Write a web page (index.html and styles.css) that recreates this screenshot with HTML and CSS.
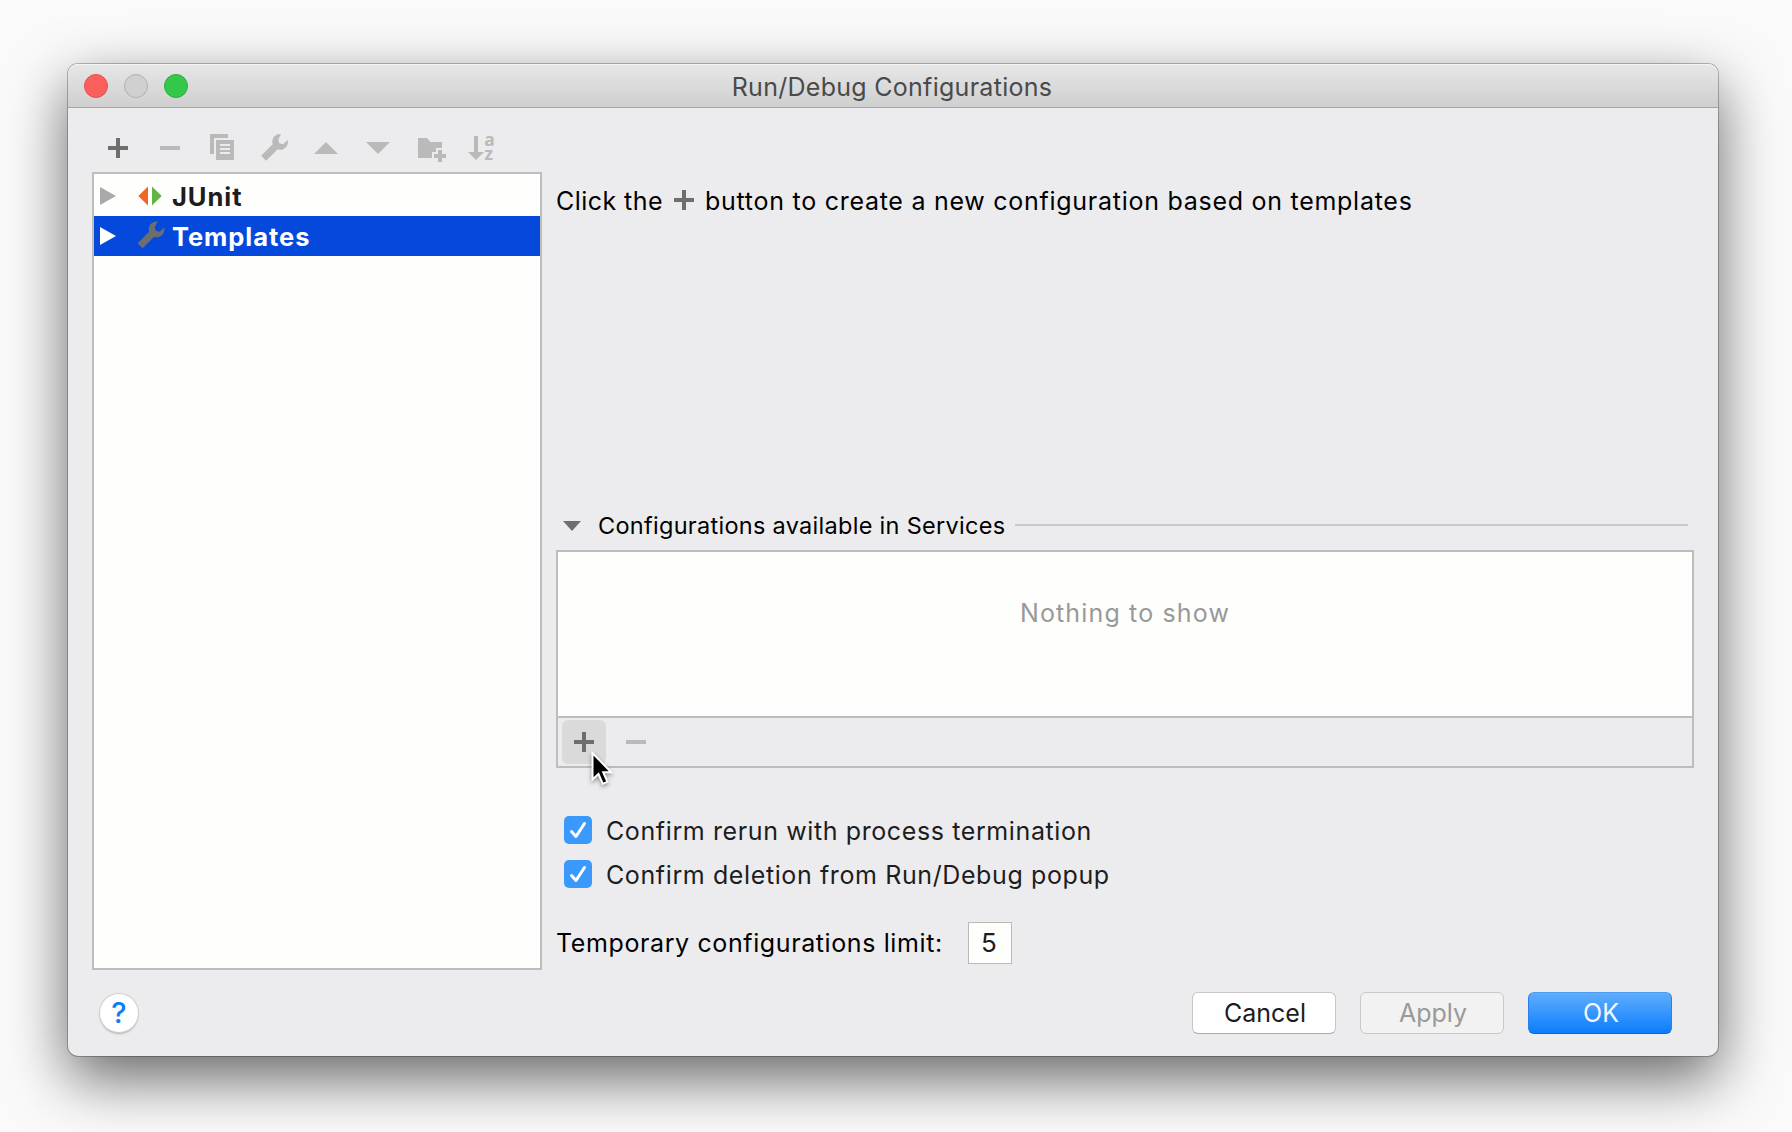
FILE: index.html
```html
<!DOCTYPE html>
<html lang="en">
<head>
<meta charset="utf-8">
<title>Run/Debug Configurations</title>
<link rel="stylesheet" href="styles.css">
</head>
<body>
<svg class="defs" width="0" height="0" aria-hidden="true">
  <symbol id="plus" viewBox="0 0 20 20"><path d="M8 0h4v8h8v4h-8v8H8v-8H0V8h8z"/></symbol>
  <symbol id="minus" viewBox="0 0 20 20"><path d="M0 8h20v4H0z"/></symbol>
  <symbol id="wrench" viewBox="0 0 28 28"><path d="M20.500.6C16 .2 12.200 3.200 11.800 7.500c-.1 1.200.1 2.200.4 3.300L.6 22.300l5 5L17.200 15.700c1.500.6 3.200.7 4.800.2 3.800-1.200 6-5 5.300-9.400l-4.700 4.200-3.900-1-.8-3.800z"/></symbol>
</svg>
<main class="window">
  <header class="titlebar">
    <div class="lights"><i class="light close"></i><i class="light idle"></i><i class="light grow"></i></div>
    <h1 class="title">Run/Debug Configurations</h1>
  </header>
  <div class="body">
    <section class="side">
      <div class="toolbar">
        <svg class="tool dark" viewBox="0 0 32 32"><use href="#plus" x="6" y="6" width="20" height="20"/></svg>
        <svg class="tool" viewBox="0 0 32 32"><use href="#minus" x="6" y="6" width="20" height="20"/></svg>
        <svg class="tool" viewBox="0 0 32 32"><path d="M4 2h18v4H8v16H4z"/><path fill-rule="evenodd" d="M10 8h18v20H10zM14 12v2h10v-2zM14 16v2h10v-2zM14 20v2h10v-2z"/></svg>
        <svg class="tool" viewBox="0 0 32 32"><use href="#wrench" x="2.500" y="1.500" width="28" height="28"/></svg>
        <svg class="tool" viewBox="0 0 32 32"><path d="M4 22h24L16 10z"/></svg>
        <svg class="tool" viewBox="0 0 32 32"><path d="M4 10h24L16 22z"/></svg>
        <svg class="tool" viewBox="0 0 32 32"><path d="M4 6h9l3.500 4H28v6h-6v4h-4v6H4z"/><path d="M24 18h4v4h4v4h-4v4h-4v-4h-4v-4h4z"/></svg>
        <svg class="tool" viewBox="0 0 32 32"><path d="M8 4h4v16h6l-8 8-8-8h6z"/><text class="glyph" x="18.300" y="13.500">a</text><text class="glyph" x="18.500" y="28">z</text></svg>
      </div>
      <ul class="tree">
        <li class="node">
          <svg class="arrow" viewBox="0 0 16 18"><path d="M0 0l16 9-16 9z"/></svg>
          <svg class="kind" viewBox="0 0 28 28"><path fill="#f26522" d="M11 4.500v19L1.300 14z"/><path fill="#62b543" d="M15 4.500v19l9.700-9.500z"/></svg>
          <span class="label">JUnit</span>
        </li>
        <li class="node selected">
          <svg class="arrow" viewBox="0 0 16 18"><path d="M0 0l16 9-16 9z"/></svg>
          <svg class="kind" viewBox="0 0 28 28"><use href="#wrench" y="-1" width="28" height="28"/></svg>
          <span class="label">Templates</span>
        </li>
      </ul>
    </section>
    <section class="main">
      <p class="hint"><span class="hint-start">Click the</span><svg class="inline-plus" viewBox="0 0 20 20"><use href="#plus"/></svg><span class="hint-end">button to create a new configuration based on templates</span></p>
      <div class="group">
        <svg class="expander" viewBox="0 0 18 10"><path d="M0 0h18l-9 10z"/></svg>
        <span>Configurations available in Services</span>
        <i class="rule"></i>
      </div>
      <div class="panel">
        <div class="empty">Nothing to show</div>
        <div class="panel-tools">
          <span class="tool-button hover"><svg viewBox="0 0 20 20"><use href="#plus"/></svg></span>
          <span class="tool-button"><svg viewBox="0 0 20 20"><use href="#minus"/></svg></span>
          <svg class="cursor" viewBox="0 0 24 38"><path d="M1.500 3v26.500l6-5.500 4.300 9.800 4.600-2-4.200-9.500h8z"/></svg>
        </div>
      </div>
      <div class="checks">
        <label class="check"><svg class="box" viewBox="0 0 28 28"><path d="M7.500 15.500l4.500 5L20.500 7.500"/></svg><span class="label">Confirm rerun with process termination</span></label>
        <label class="check"><svg class="box" viewBox="0 0 28 28"><path d="M7.500 15.500l4.500 5L20.500 7.500"/></svg><span class="label">Confirm deletion from Run/Debug popup</span></label>
      </div>
      <div class="limit"><span class="limit-label">Temporary configurations limit:</span><span class="field">5</span></div>
    </section>
  </div>
  <footer class="footer">
    <span class="help">?</span>
    <span class="button">Cancel</span>
    <span class="button disabled">Apply</span>
    <span class="button primary">OK</span>
  </footer>
</main>
</body>
</html>
```
FILE: styles.css
```css
* { box-sizing: border-box; }
body {
  margin: 0;
  width: 1792px;
  height: 1132px;
  padding: 64px 74px 76px 68px;
  overflow: hidden;
  background: #fafafa;
  color: #000;
  font: 25px/32px Inter, "Liberation Sans", sans-serif;
}
.defs { position: absolute; }
svg { display: block; fill: currentColor; flex: none; overflow: visible; }
.window {
  display: flex;
  flex-direction: column;
  width: 1650px;
  height: 992px;
  border-radius: 10px;
  background: #ececee;
  box-shadow: 0 0 0 1px rgba(0, 0, 0, .25), 0 22px 60px rgba(0, 0, 0, .6);
}
.titlebar {
  display: grid;
  grid-template-columns: 140px 1fr 140px;
  align-items: center;
  height: 44px;
  border-bottom: 1px solid #a5a5a5;
  border-radius: 10px 10px 0 0;
  background: linear-gradient(#e7e7e7, #cfcfcf);
  box-shadow: inset 0 1px #f4f4f4;
}
.lights { display: flex; gap: 16px; padding-left: 16px; }
.light { width: 24px; height: 24px; border: 1px solid; border-radius: 50%; }
.close { background: #fc605c; border-color: #e2504c; }
.idle { background: #d0d0d0; border-color: #b1b1b1; }
.grow { background: #34c84a; border-color: #2aae3a; }
.title { margin: 2px 2px 0 0; font-size: 25px; font-weight: 400; letter-spacing: .28px; text-align: center; color: #4a4a4a; white-space: nowrap; }
.body { display: grid; grid-template-columns: 450px 1138px; column-gap: 14px; height: 862px; padding: 0 24px; }
.toolbar { display: flex; gap: 20px; height: 64px; padding: 24px 0 8px 10px; color: #bababa; }
.tool { width: 32px; height: 32px; }
.dark { color: #6e6e6e; }
.glyph { font: 700 17.500px "Open Sans", sans-serif; }
.tree { height: 798px; margin: 0; padding: 2px 0; border: 2px solid #bdbdbd; background: #fefefd; list-style: none; font-size: 25.500px; font-weight: 700; letter-spacing: .95px; }
.node { display: flex; align-items: center; height: 40px; padding-left: 6px; color: #1d1d1d; }
.node .arrow { width: 16px; height: 18px; margin: -1px 21px 0 0; color: #a9a9a9; }
.node .kind { width: 28px; height: 28px; margin-right: 7px; color: #6e6e6e; }
.node .label { padding-top: 2px; }
.selected { color: #fff; background: #0549dc; }
.selected .arrow { color: #fff; }
.main { display: flex; flex-direction: column; padding-top: 64px; white-space: nowrap; }
.hint { display: flex; align-items: center; height: 58px; margin: 0 0 279px; }
.hint-start { letter-spacing: .45px; }
.hint-end { letter-spacing: .73px; }
.inline-plus { width: 20px; height: 20px; margin: 0 11px 2px; color: #6e6e6e; }
.group { display: flex; align-items: center; height: 33px; margin-bottom: 8px; padding: 0 6px 0 7px; font-size: 23.500px; letter-spacing: .29px; }
.expander { width: 18px; height: 10px; margin-right: 17px; color: #6e6e6e; }
.rule { flex: 1; height: 2px; margin: -1px 0 0 10px; background: #c8c8c8; }
.panel { height: 218px; border: 2px solid #bdbdbd; }
.empty { height: 166px; padding-top: 45px; border-bottom: 2px solid #bdbdbd; background: #fefefd; color: #999; letter-spacing: 1.150px; text-align: center; }
.panel-tools { display: flex; gap: 8px; padding: 2px 4px; position: relative; color: #bababa; }
.tool-button { display: grid; place-items: center; width: 44px; height: 44px; border-radius: 6px; }
.tool-button svg { width: 20px; height: 20px; }
.hover { background: #dadada; color: #6e6e6e; }
.cursor { position: absolute; left: 33px; top: 32px; width: 24px; height: 38px; fill: #000; stroke: #fff; stroke-width: 2px; filter: drop-shadow(0 2px 2px rgba(0, 0, 0, .4)); }
.checks { display: flex; flex-direction: column; gap: 16px; padding: 48px 8px 0; color: #1d1d1d; letter-spacing: .61px; }
.check { display: flex; align-items: center; gap: 14px; height: 28px; }
.check .label { padding-top: 2px; }
.box { width: 28px; height: 28px; border-radius: 5px; background: #3a99fc; fill: none; stroke: #fff; stroke-width: 3px; stroke-linecap: round; stroke-linejoin: round; }
.limit { display: flex; align-items: center; margin-top: 34px; }
.limit-label { width: 412px; letter-spacing: .61px; }
.field { width: 44px; height: 42px; border: 1px solid #b9b9b9; background: #fefefd; color: #1d1d1d; font-size: 26px; line-height: 40px; padding-right: 2px; text-align: center; }
.footer { display: flex; align-items: center; gap: 24px; padding: 22px 46px 0 32px; }
.help { width: 38px; height: 38px; margin-right: auto; border-radius: 50%; background: #fff; box-shadow: 0 0 0 1px #cfcfcf, 0 2px 2px rgba(0, 0, 0, .25); color: #117cf6; font-size: 29px; font-weight: 500; line-height: 38px; text-align: center; }
.button { width: 144px; height: 42px; padding-left: 2px; border: 1px solid #c6c6c6; border-bottom-color: #a9a9a9; border-radius: 6px; background: #fff; color: #1d1d1d; line-height: 40px; text-align: center; }
.disabled { background: #f2f2f2; border-color: #c9c9c9; color: #999; }
.primary { background: linear-gradient(#5fadfc, #0d7dfc); border-color: #4a9cf4 #2a7fe8 #0a65d8; color: #f4f8ff; }
```
